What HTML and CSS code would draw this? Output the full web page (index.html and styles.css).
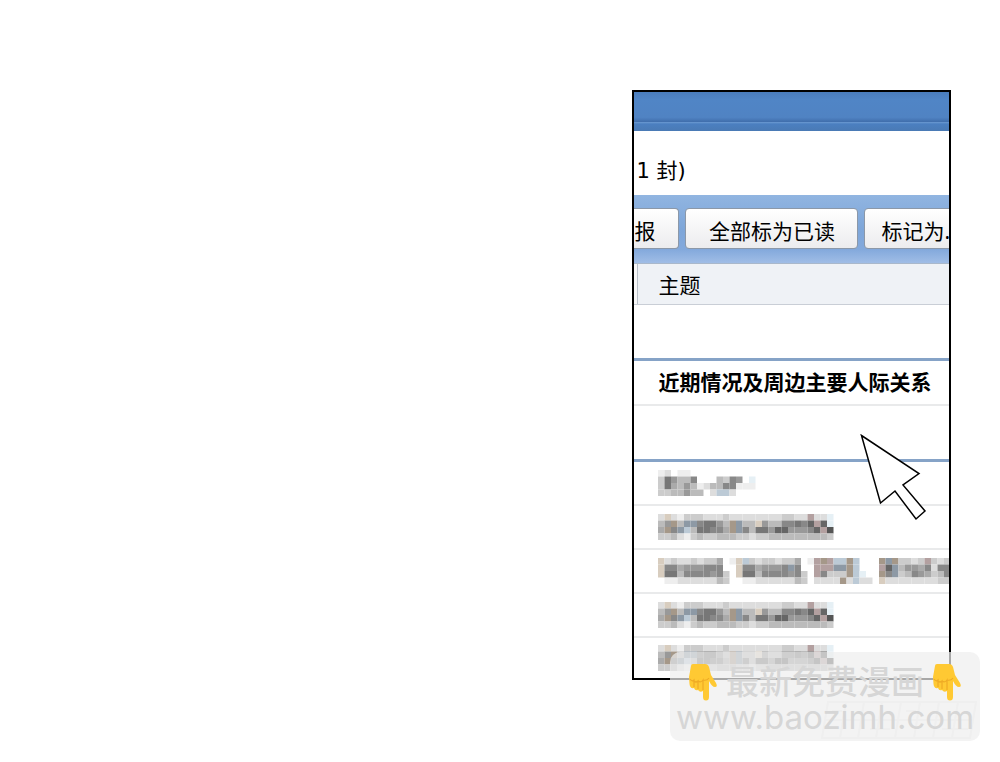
FILE: index.html
```
<!DOCTYPE html>
<html lang="zh-CN">

<head>
    <meta charset="UTF-8">
    <meta name="viewport" content="width=device-width, initial-scale=1.0">
    <title>收件箱</title>
    <link rel="stylesheet" href="styles.css">
</head>

<body>
    <main class="mail">
        <div class="titlebar"></div>
        <p class="count">1 封)</p>

        <div class="toolbar">
            <button type="button" class="first">报</button>
            <button type="button">全部标为已读</button>
            <button type="button">标记为...</button>
        </div>

        <table class="subjects">
            <thead>
                <tr><th scope="col">主题</th></tr>
            </thead>
            <tbody>
                <tr class="group"><td></td></tr>
                <tr class="unread"><td>近期情况及周边主要人际关系</td></tr>
                <tr class="group"><td></td></tr>
                <tr><td class="mosaic" data-rows="line1"></td></tr>
                <tr><td class="mosaic" data-rows="line2"></td></tr>
                <tr><td class="mosaic" data-rows="line3"></td></tr>
                <tr><td class="mosaic" data-rows="line2"></td></tr>
                <tr class="last"><td class="mosaic" data-rows="line2"></td></tr>
            </tbody>
        </table>
    </main>

    <svg class="cursor" viewBox="0 0 68 88" aria-hidden="true">
        <path d="M1.5 1.5 59 39.5 43 51 65 77 56 85 35 57 20.500 69Z" />
    </svg>

    <aside class="watermark">
        <svg class="stamp" viewBox="0 0 158 40" aria-hidden="true">
            <path d="M8 2H156L150 38H2ZM5 20H153M26 2 20 38M44 2 38 38M62 2 56 38M81 2 75 38M100 2 94 38M119 2 113 38M138 2 132 38M12 11H22M50 29H70M86 11H96M122 29H148" />
        </svg>
        <div class="slogan">
            <svg class="hand" viewBox="0 0 30 38" aria-hidden="true"><use href="#hand" /></svg>
            <span>最新免费漫画</span>
            <svg class="hand" viewBox="0 0 30 38" aria-hidden="true"><use href="#hand" /></svg>
        </div>
        <a href="#">www.baozimh.com</a>
    </aside>

    <svg class="defs" aria-hidden="true">
        <symbol id="hand" viewBox="0 0 30 38">
            <path fill="#ffc933" d="M5 1H17Q20 1 21 4L23 12 28 20Q30 24 27 24 24 24 21 18V34Q21 37.500 18 37.500 15 37.500 15 34V28Q12 30 10 27 7 28 6 25 2 26 1.500 21L1 14 3 3Q3 1 5 1Z" />
            <path fill="none" stroke="#efab25" stroke-width="1.200" d="M2 16Q4 19 6 17V24M6 18Q8 20 10 18V26M10 18Q13 20 15 17V27M15 17Q19 18 21 15" />
        </symbol>
    </svg>

    <script>
        // one character per block: hex digit = grey level, letters from p on = tints
        const tints = { p: "#d8cdbf", q: "#a59889", r: "#bccad6", s: "#8d99a5", t: "#b3a0a0", u: "#e6f0f5" };
        const mosaics = {
            line1: [
                "edfeeff",
                "c79bb8fffbc89fu",
                "c7ab9bedbb88eee",
                "ccbb9bbfdrrdf"
            ],
            line2: [
                "dpdecccdddcddddddddccddtddu",
                "b9qbss8779bqsbbp9bb88786t6u",
                "aq8srb7788aqs8b7796699986t5",
                "ccbdecbccbbbccdccbbbbbbbbbc"
            ],
            line3: [
                "pdcddcdccafeprcdccdccafetqtrrqrfffqsqccdctcdccc",
                "p88a999888ffp88a9998s8fftttssqrffft6sb99a8d88b8",
                "p77b888898cfp77b888898cft8cccqruffq8scb89acb887",
                "feeddddddbcffeeddddddbcfddddqdrddfpddddddddcccc"
            ]
        };

        document.querySelectorAll(".mosaic").forEach(cell => {
            const rows = mosaics[cell.dataset.rows];
            const cols = rows[1].length;
            let rects = "";

            rows.forEach((row, y) => {
                [...row].forEach((c, x) => {
                    if (c != "f") {
                        const fill = tints[c] || "#" + c + c + c;
                        rects += `<rect x="${x * 13}" y="${y * 13}" width="13" height="13" fill="${fill}"/>`;
                    }
                });
            });

            cell.innerHTML = `<svg viewBox="0 0 ${cols * 13} 52" aria-hidden="true">${rects}</svg>`;
        });
    </script>
</body>

</html>
```
FILE: styles.css
```
* {
    box-sizing: border-box;
    margin: 0;
}

body {
    position: relative;
    padding: 90px 49px 80px 0;
    background-color: #fff;
    font-family: "Noto Sans", "Noto Sans CJK SC", sans-serif;
    font-size: 21px;
    color: #000;
}

.mail {
    width: 33.5%;
    min-width: 300px;
    margin-left: auto;
    border: 2px solid #000;
    overflow: hidden;
}

.titlebar {
    height: 39px;
    background: linear-gradient(#4a7dbd, #5085c6 20%, #5083c3 65%, #416fad 76%, #6c9ad2 77%, #4b7fc0 82%, #4a7ab5);
}

.count {
    padding: 24px 2px 8px;
    font-family: "DejaVu Sans", "Noto Sans CJK SC", sans-serif;
    line-height: 32px;
}

.toolbar {
    display: flex;
    gap: 6px;
    padding: 13px 0 14px;
    background: linear-gradient(#91b5e1, #7ea6d9 50%, #83a9dc 80%, #a0bde6);
    border-bottom: 1px solid #a9b8cb;
}

.toolbar button {
    flex: none;
    width: 173px;
    height: 41px;
    padding: 4px 0 0;
    border: 1px solid #8c98a8;
    border-radius: 4px;
    background: linear-gradient(#fff, #ececee);
    font: inherit;
    line-height: 30px;
    color: inherit;
}

.toolbar .first {
    width: 45px;
    border-left: none;
    border-radius: 0 4px 4px 0;
    text-align: left;
}

.toolbar button:last-child {
    padding-left: 16px;
    text-align: left;
}

.subjects {
    width: 100%;
    table-layout: fixed;
    border-collapse: separate;
    border-spacing: 0;
}

.subjects th,
.subjects td {
    height: 44px;
    padding: 0 0 0 24px;
    border-bottom: 2px solid #e9eaeb;
    text-align: left;
    white-space: nowrap;
}

.subjects th {
    height: 41px;
    border-bottom: 1px solid #c9ced6;
    background: linear-gradient(90deg, #f8f8f9 3px, #b9c0c9 3px, #b9c0c9 4px, #eff2f6 4px);
    font-weight: normal;
}

.subjects .group td {
    height: 56px;
    border-bottom: 3px solid #86a3c7;
}

.subjects .unread td {
    height: 45px;
    padding-bottom: 4px;
    font-weight: bold;
}

.subjects .last td {
    height: 40px;
    border-bottom: none;
}

.mosaic svg {
    display: block;
    height: 26px;
}

.cursor {
    position: absolute;
    top: 434px;
    right: 72px;
    width: 68px;
    height: 88px;
    fill: #fff;
    stroke: #000;
    stroke-width: 1.5;
}

.watermark {
    position: absolute;
    top: 652px;
    right: 20px;
    width: 310px;
    height: 89px;
    padding: 11px 0;
    border-radius: 10px;
    background-color: rgba(238, 238, 238, 0.7);
    color: #d6d6d6;
    text-align: center;
}

.stamp {
    position: absolute;
    z-index: -1;
    right: 2px;
    bottom: 1px;
    width: 158px;
    height: 40px;
    fill: none;
    stroke: #f0f0f0;
    stroke-width: 2;
}

.slogan {
    display: flex;
    align-items: center;
    justify-content: center;
    gap: 8px;
    font-size: 33px;
    font-weight: 500;
    line-height: 38px;
}

.hand {
    width: 30px;
    height: 38px;
}

.watermark a {
    display: block;
    font-family: Inter, sans-serif;
    font-size: 33px;
    line-height: 32px;
    color: inherit;
    text-decoration: none;
}

.defs {
    display: none;
}
```
